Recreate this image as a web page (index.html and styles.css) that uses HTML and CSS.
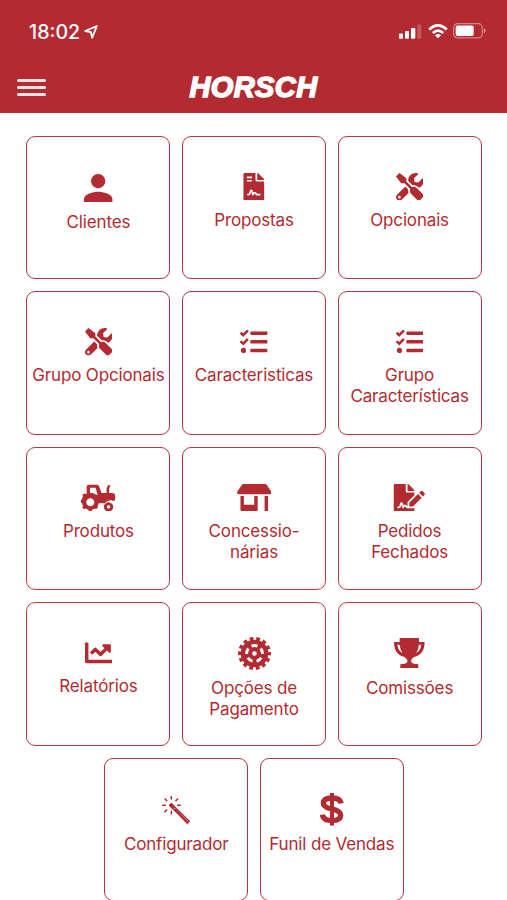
FILE: index.html
```html
<!DOCTYPE html>
<html lang="pt-BR">
<head>
<meta charset="utf-8">
<title>HORSCH</title>
<link rel="stylesheet" href="styles.css">
</head>
<body>
<svg class="defs" aria-hidden="true">
  <symbol id="tools" viewBox="0 0 512 512"><path d="M501.1 395.7L384 278.6c-23.1-23.1-57.6-27.6-85.4-13.9L192 158.1V96L64 0 0 64l96 128h62.1l106.6 106.6c-13.6 27.8-9.2 62.3 13.9 85.4l117.1 117.1c14.6 14.6 38.2 14.6 52.7 0l52.7-52.7c14.5-14.6 14.5-38.2 0-52.7zM331.7 225c28.3 0 54.9 11 74.9 31l19.4 19.4c15.8-6.9 30.8-16.5 43.8-29.5 37.1-37.1 49.7-89.3 37.9-136.7-2.2-9-13.5-12.1-20.1-5.5l-74.4 74.4-67.9-11.3L334 98.9l74.4-74.4c6.6-6.6 3.4-17.9-5.7-20.2-47.4-11.7-99.6.9-136.6 37.9-28.5 28.5-41.9 66.1-41.2 103.6l82.1 82.1c8.1-1.9 16.5-2.9 24.7-2.9zm-103.9 82l-56.7-56.7L18.7 402.8c-25 25-25 65.5 0 90.5s65.5 25 90.5 0l123.6-123.6c-7.6-19.9-9.9-41.6-5-62.7zM64 472c-13.2 0-24-10.8-24-24 0-13.3 10.7-24 24-24s24 10.7 24 24c0 13.2-10.7 24-24 24z"/></symbol>
  <symbol id="tasks" viewBox="0 0 512 512"><path d="M139.61 35.5a12 12 0 0 0-17 0L58.93 98.81l-22.7-22.12a12 12 0 0 0-17 0L3.53 92.41a12 12 0 0 0 0 17l47.59 47.4a12.78 12.78 0 0 0 17.61 0l15.59-15.62L156.52 69a12.09 12.09 0 0 0 .09-17zm0 159.19a12 12 0 0 0-17 0l-63.68 63.72-22.7-22.1a12 12 0 0 0-17 0L3.53 252a12 12 0 0 0 0 17L51 316.5a12.77 12.77 0 0 0 17.6 0l15.7-15.69 72.2-72.22a12 12 0 0 0 .09-16.9zM64 368c-26.49 0-48.59 21.5-48.59 48S37.53 464 64 464a48 48 0 0 0 0-96zm432 16H208a16 16 0 0 0-16 16v32a16 16 0 0 0 16 16h288a16 16 0 0 0 16-16v-32a16 16 0 0 0-16-16zm0-320H208a16 16 0 0 0-16 16v32a16 16 0 0 0 16 16h288a16 16 0 0 0 16-16V80a16 16 0 0 0-16-16zm0 160H208a16 16 0 0 0-16 16v32a16 16 0 0 0 16 16h288a16 16 0 0 0 16-16v-32a16 16 0 0 0-16-16z"/></symbol>
</svg>
<header class="header">
  <div class="status">
    <div class="status-left">
      <span class="time">18:02</span>
      <svg class="location" viewBox="0 0 14 14"><path d="M12.8 1.2 1.2 6 6.9 7.2 8.1 12.8Z" fill="none" stroke="#fff" stroke-width="1.8" stroke-linejoin="round"/></svg>
    </div>
    <div class="status-right">
      <svg class="signal" viewBox="0 0 23 15"><g fill="#fff"><rect x="0" y="9.5" width="4" height="5.2" rx="1"/><rect x="6" y="7" width="4" height="7.7" rx="1"/><rect x="12" y="4" width="4.3" height="10.7" rx="1"/><rect x="18.3" y=".5" width="4" height="14.2" rx="1" opacity=".22"/></g></svg>
      <svg class="wifi" viewBox="0 0 20 15"><g fill="none" stroke="#fff" stroke-width="2.5"><path d="M1.2 5.5Q10-2.7 18.8 5.5M4.8 9Q10 4.3 15.2 9"/></g><path d="M10 14.3 6.9 11.3Q10 8.7 13.1 11.3Z" fill="#fff"/></svg>
      <svg class="battery" viewBox="0 0 33 16"><rect x=".7" y=".7" width="28.6" height="14.2" rx="4" fill="none" stroke="#fff" stroke-opacity=".42" stroke-width="1.2"/><rect x="2.7" y="2.6" width="18" height="10.4" rx="2" fill="#fff"/><path d="M30.8 5.3q1.8.8 1.8 2.5t-1.8 2.5Z" fill="#fff" opacity=".5"/></svg>
    </div>
  </div>
  <div class="toolbar">
    <div class="menu"><span></span><span></span><span></span></div>
    <div class="brand">HORSCH</div>
  </div>
</header>
<main class="grid">
  <div class="card"><svg class="icon tall person" viewBox="4 4 16 16"><path d="M12 12c2.21 0 4-1.79 4-4s-1.79-4-4-4-4 1.79-4 4 1.79 4 4 4zm0 2c-2.67 0-8 1.34-8 4v2h16v-2c0-2.66-5.33-4-8-4z"/></svg><span>Clientes</span></div>
  <div class="card"><svg class="icon" viewBox="0 0 384 512"><path d="M224 136V0H24C10.7 0 0 10.7 0 24v464c0 13.3 10.7 24 24 24h336c13.3 0 24-10.7 24-24V160H248c-13.2 0-24-10.8-24-24zM64 72c0-4.42 3.58-8 8-8h80c4.42 0 8 3.58 8 8v16c0 4.42-3.58 8-8 8H72c-4.42 0-8-3.58-8-8V72zm0 64c0-4.42 3.58-8 8-8h80c4.42 0 8 3.58 8 8v16c0 4.42-3.58 8-8 8H72c-4.42 0-8-3.58-8-8v-16zm192.81 248H304c8.84 0 16 7.16 16 16s-7.16 16-16 16h-47.19c-16.45 0-31.23-9.14-38.64-23.86-2.95-5.92-8.09-6.52-10.17-6.52s-7.22.59-10.02 6.19l-7.67 15.34a15.986 15.986 0 0 1-14.31 8.84c-.38 0-.75-.02-1.14-.05-6.45-.45-12-4.75-14.03-10.89L144 354.59l-10.61 31.88c-5.89 17.66-22.38 29.53-41 29.53H80c-8.84 0-16-7.16-16-16s7.16-16 16-16h12.39c4.83 0 9.11-3.08 10.64-7.66l18.19-54.64c3.3-9.81 12.44-16.41 22.78-16.41s19.48 6.59 22.77 16.41l13.88 41.64c19.77-16.19 54.05-9.7 66 14.16 2.95 5.92 8.27 6.5 10.16 6.5zM377 105L279.1 7c-4.5-4.5-10.6-7-17-7H256v128h128v-6.1c0-6.3-2.5-12.4-7-16.9z"/></svg><span>Propostas</span></div>
  <div class="card"><svg class="icon"><use href="#tools"/></svg><span>Opcionais</span></div>
  <div class="card"><svg class="icon"><use href="#tools"/></svg><span>Grupo Opcionais</span></div>
  <div class="card"><svg class="icon"><use href="#tasks"/></svg><span>Caracteristicas</span></div>
  <div class="card"><svg class="icon"><use href="#tasks"/></svg><span>Grupo<br>Características</span></div>
  <div class="card"><svg class="icon wide" viewBox="184 128 104 83"><path fill-rule="evenodd" d="M201 158v-22q0-6 6-6h25q4 0 6 4l8 21h15v-14q0-3 3-4v-3q0-3 4-3t4 3q0 3-3 5v16h8q10 0 10 8v10q0 5-5 6-15-7-27 7h-18q0 5-3 8 2 5-2 8-3 2-6 0-4 3-8 3 0 5-6 5t-6-5q-4 0-8-3-4 3-8-1-3-4 0-8-3-4-3-8-4 0-4-5 0-6 4-6 1-6 3-9-3-4 1-7 2-2 5-1zM211 139v16q13-1 18 5h5l-6-21zM212 171a12 12 0 1 0 .1 0z"/><path fill-rule="evenodd" d="M267 183a14 14 0 1 0 .1 0zm0 9a5 5 0 1 1-.1 0z"/></svg><span>Produtos</span></div>
  <div class="card"><svg class="icon wide" viewBox="0 0 640 512"><path d="M320 384H128V224H64v256c0 17.7 14.3 32 32 32h256c17.7 0 32-14.3 32-32V224h-64v160zm314.6-241.8l-85.3-128c-6-8.9-16-14.2-26.7-14.2H117.4c-10.7 0-20.7 5.3-26.6 14.2l-85.3 128c-14.2 21.3 1 49.8 26.6 49.8H608c25.5 0 40.7-28.5 26.6-49.8zM512 496c0 8.8 7.2 16 16 16h32c8.8 0 16-7.2 16-16V224h-64v272z"/></svg><span>Concessio-<br>nárias</span></div>
  <div class="card"><svg class="icon wide" viewBox="0 0 576 512"><path d="M218.17 424.14c-2.95-5.92-8.09-6.52-10.17-6.52s-7.22.59-10.02 6.19l-7.67 15.34c-6.37 12.78-25.03 11.37-29.48-2.09L144 386.59l-10.61 31.88c-5.89 17.66-22.38 29.53-41 29.53H80c-8.84 0-16-7.16-16-16s7.16-16 16-16h12.39c4.83 0 9.11-3.08 10.64-7.66l18.19-54.64c3.3-9.81 12.44-16.41 22.78-16.41s19.48 6.59 22.77 16.41l13.88 41.64c19.75-16.19 54.06-9.7 66 14.16 1.89 3.78 5.49 5.95 9.36 6.26v-82.12l128-127.09V160H248c-13.2 0-24-10.8-24-24V0H24C10.7 0 0 10.7 0 24v464c0 13.3 10.7 24 24 24h336c13.3 0 24-10.7 24-24v-40l-128-.11c-16.12-.31-30.58-9.28-37.83-23.75zM384 121.9c0-6.3-2.5-12.4-7-16.9L279.1 7c-4.5-4.5-10.6-7-17-7H256v128h128v-6.1zm-96 225.06V416h68.99l161.68-162.78-67.88-67.88L288 346.96zm280.54-179.63l-31.87-31.87c-9.94-9.94-26.07-9.94-36.01 0l-27.25 27.25 67.88 67.88 27.25-27.25c9.95-9.94 9.95-26.07 0-36.01z"/></svg><span>Pedidos<br>Fechados</span></div>
  <div class="card"><svg class="icon" viewBox="0 0 512 512"><path d="M496 384H64V80c0-8.84-7.16-16-16-16H16C7.16 64 0 71.16 0 80v336c0 17.67 14.33 32 32 32h464c8.84 0 16-7.16 16-16v-32c0-8.84-7.16-16-16-16zM464 96H345.94c-21.38 0-32.09 25.85-16.97 40.97l32.4 32.4L288 242.75l-73.37-73.37c-12.5-12.5-32.76-12.5-45.25 0l-68.69 68.69c-6.25 6.25-6.25 16.38 0 22.63l22.62 22.62c6.25 6.25 16.38 6.25 22.63 0L192 237.25l73.37 73.37c12.5 12.5 32.76 12.5 45.25 0l96-96 32.4 32.4c15.12 15.12 40.97 4.41 40.97-16.97V112c.01-8.84-7.15-16-15.99-16z"/></svg><span>Relatórios</span></div>
  <div class="card"><svg class="icon tall gear" viewBox="-50 -50 100 100"><circle r="42"/><g fill="none"><circle r="45" stroke="currentColor" stroke-width="10" pathLength="140" stroke-dasharray="5.6 4.4" stroke-dashoffset="2.8"/><circle r="24" stroke="#fff" stroke-width="9" pathLength="100" stroke-dasharray="12 8" transform="rotate(-111.6)"/></g><circle r="7" fill="#fff"/></svg><span>Opções de<br>Pagamento</span></div>
  <div class="card"><svg class="icon tall trophy" viewBox="0 0 92 90"><path fill-rule="evenodd" d="M17 0h58v12h17q0 38-32 45-5 5-8 8v8q5 6 21 6v11H19V79q16 0 21-6v-8q-4-3-8-8Q0 50 0 12h17zM10 20q3 18 15 25-7-12-8-25zM82 20h-7q-1 13-8 25 12-7 15-25z"/></svg><span>Comissões</span></div>
  <div class="card"><svg class="icon tall wand" viewBox="0 0 84 84"><g fill="none" stroke="currentColor" stroke-linecap="round" stroke-width="4.6"><path d="M28 2v7M28 46v7M2 28h8M47 28h8M9 9l5 5M47 9l-5 5M9 47l5-5"/><path stroke-width="4" stroke-linejoin="round" d="M23 28 28 23 82 76 76 82ZM39 40 76 77M35 36 29 32"/></g><path d="M20 28 28 20 39 31 31 39Z"/></svg><span>Configurador</span></div>
  <div class="card"><svg class="icon tall dollar" viewBox="0 0 72 98"><path d="M64 31Q60 15 36 15 10 15 10 31 10 43 35 48 62 54 62 67 62 83 36 83 9 83 7 65" fill="none" stroke="currentColor" stroke-width="16"/><path d="M30 0h12v98H30z"/></svg><span>Funil de Vendas</span></div>
</main>
</body>
</html>
```
FILE: styles.css
```css
* { box-sizing: border-box; }
body {
  margin: 0;
  height: 900px;
  overflow: hidden;
  background: #fff;
  color: #b22b31;
  font-family: Inter, "Liberation Sans", sans-serif;
}
.defs { display: none; }
.header {
  height: 113px;
  background: #b32b31;
  color: #fff;
}
.status {
  display: flex;
  justify-content: space-between;
  align-items: center;
  height: 62px;
  padding: 0 21px 0 29px;
}
.status-left, .status-right { display: flex; align-items: center; }
.status-left { gap: 4px; padding-top: 1px; }
.time { font-size: 19.6px; font-weight: 500; line-height: 24px; }
.location { width: 14px; height: 14px; }
.signal { width: 23px; height: 15px; margin-right: 6px; }
.wifi { width: 20px; height: 15px; margin-right: 5px; }
.battery { width: 33px; height: 16px; }
.toolbar {
  display: grid;
  grid-template-columns: 1fr auto 1fr;
  align-items: center;
  height: 51px;
  padding: 0 17px;
}
.menu { display: grid; gap: 4.6px; width: 29px; }
.menu span { height: 2.6px; border-radius: 2px; background: #fbe5e5; }
.brand {
  font: italic bold 29px/34px "Liberation Sans", sans-serif;
  letter-spacing: .4px;
  -webkit-text-stroke: 1.5px #fff;
  padding-bottom: 2px;
}
.grid {
  display: flex;
  flex-wrap: wrap;
  justify-content: center;
  gap: 11.9px 11.6px;
  padding: 22.8px 19.5px 0 20.5px;
}
.card {
  display: flex;
  flex-direction: column;
  align-items: center;
  width: 144px;
  height: 143.6px;
  padding-top: 35.8px;
  border: 1px solid #b9383f;
  border-radius: 9px;
  font-size: 17px;
  letter-spacing: -.16px;
  line-height: 20.8px;
  text-align: center;
  white-space: nowrap;
}
.icon {
  flex: none;
  width: 27.6px;
  height: 27.6px;
  margin-bottom: 9.6px;
  fill: currentColor;
}
.wide { width: 34.5px; }
.tall { margin-bottom: 10.2px; }
.person { width: 28.4px; height: 28.4px; margin-top: 1px; margin-bottom: 9.8px; }
.gear { width: 33px; height: 33px; margin-top: -2px; margin-bottom: 8px; }
.trophy { width: 30.6px; height: 30px; margin-top: -1px; }
.wand { width: 28px; height: 28px; margin-top: 1px; }
.dollar { width: 24px; height: 32.6px; margin-top: -1.5px; margin-bottom: 8px; }
```
